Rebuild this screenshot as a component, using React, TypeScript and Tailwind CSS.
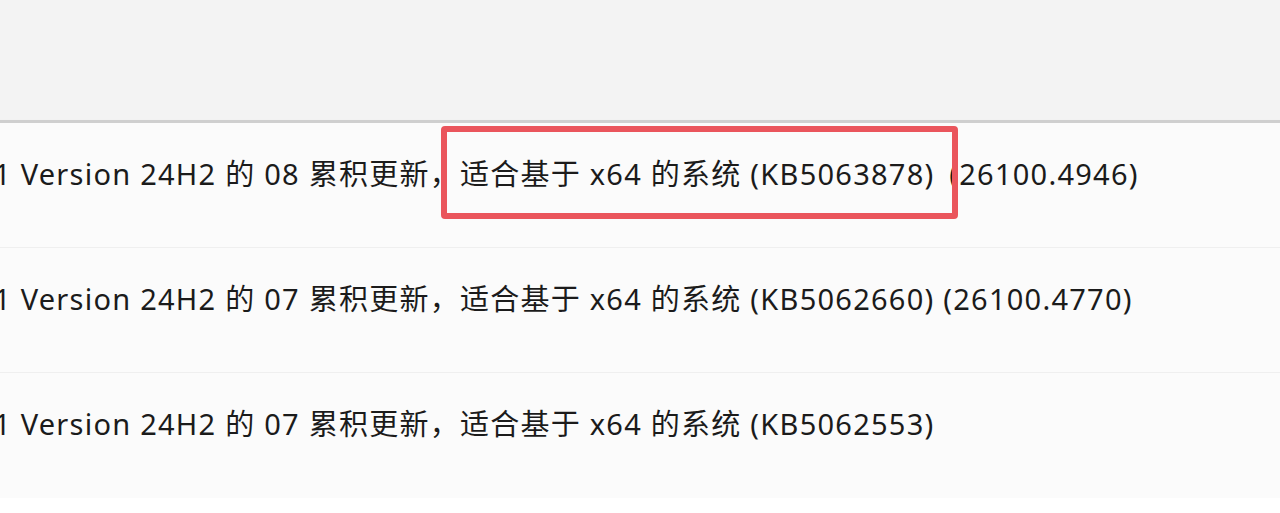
import React from 'react';

interface Update {
  month: string;
  kb: string;
  build?: string;
  highlight?: boolean;
}

const updates: Update[] = [
  { month: '08', kb: 'KB5063878', build: '26100.4946', highlight: true },
  { month: '07', kb: 'KB5062660', build: '26100.4770' },
  { month: '07', kb: 'KB5062553' },
];

const font = { fontFamily: '"Noto Sans", "Noto Sans CJK SC", sans-serif' };

export default function App() {
  return (
    <div className="w-[1280px] h-[513px] overflow-hidden bg-white text-[#1b1b1b]" style={font}>
      <div className="h-[120px] bg-[#f3f3f3]" />
      <div className="h-[3px] bg-[#cfcfcf] shadow-[0_1px_2px_rgba(0,0,0,0.12)]" />

      <div className="bg-[#fbfbfb]">
        {updates.map((u, i) => (
          <div
            key={u.kb}
            className={
              'h-[125px] pt-[36px] overflow-hidden ' +
              (i < updates.length - 1 ? 'border-b border-[#efefef]' : '')
            }
          >
            <p className="-ml-[6px] whitespace-nowrap text-[29px] leading-[29px] tracking-[1.25px]">
              <span>1 Version 24H2 的 {u.month} 累积更新，</span>
              <span className="relative">
                适合基于 x64 的系统 ({u.kb})
                {u.highlight && (
                  <span className="absolute -left-[19px] -right-[24px] -top-[28px] -bottom-[26px] border-[6px] border-[#ea555c] rounded-[4px]" />
                )}
              </span>
              {u.build && (
                <span className={u.highlight ? 'ml-[6px]' : ''}> ({u.build})</span>
              )}
            </p>
          </div>
        ))}
      </div>
    </div>
  );
}
